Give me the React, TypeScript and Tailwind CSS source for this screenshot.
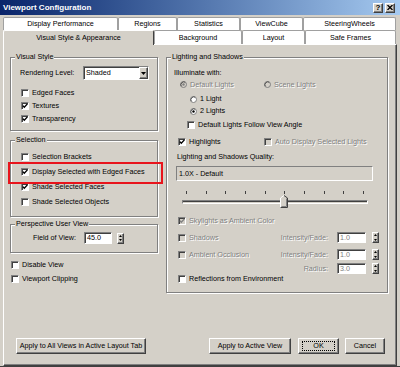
import type { ReactNode } from "react"

const raised =
  "bg-[#d4d0c8] border border-t-white border-l-white border-r-[#404040] border-b-[#404040] shadow-[inset_-1px_-1px_0_#808080]"
const sunken =
  "border border-t-[#808080] border-l-[#808080] border-r-white border-b-white shadow-[inset_1px_1px_0_#404040]"

function Label({ children, disabled }: { children: ReactNode; disabled?: boolean }) {
  return (
    <span
      className={
        disabled
          ? "whitespace-nowrap text-[#808080] [text-shadow:1px_1px_0_#fff]"
          : "whitespace-nowrap"
      }
    >
      {children}
    </span>
  )
}

function Box({ checked, disabled }: { checked?: boolean; disabled?: boolean }) {
  return (
    <span
      className={`relative block h-[8px] w-[8px] shrink-0 ${sunken} ${
        disabled ? "bg-[#d4d0c8]" : "bg-white"
      }`}
    >
      {checked && (
        <svg viewBox="0 0 8 8" className="absolute -inset-[1px] h-[8px] w-[8px]">
          <polyline
            points="1.8,3.6 3.3,5.3 6.4,1.9"
            fill="none"
            stroke={disabled ? "#808080" : "#000"}
            strokeWidth="1.4"
          />
        </svg>
      )}
    </span>
  )
}

function Check({
  label,
  checked,
  disabled,
  className = "",
}: {
  label: string
  checked?: boolean
  disabled?: boolean
  className?: string
}) {
  return (
    <div className={`flex items-center gap-[3px] ${className}`}>
      <Box checked={checked} disabled={disabled} />
      <Label disabled={disabled}>{label}</Label>
    </div>
  )
}

function Radio({
  label,
  checked,
  disabled,
  className = "",
}: {
  label: string
  checked?: boolean
  disabled?: boolean
  className?: string
}) {
  return (
    <div className={`flex items-center gap-[3px] ${className}`}>
      <svg viewBox="0 0 7 7" className="h-[7px] w-[7px] shrink-0">
        <circle cx="3.5" cy="3.5" r="3" fill={disabled ? "#d4d0c8" : "#fff"} stroke="#808080" strokeWidth="1" />
        <path d="M1.2,5.2 A3,3 0 0 1 5.2,1.2" fill="none" stroke="#404040" strokeWidth="0.8" />
        {checked && <circle cx="3.5" cy="3.5" r="1.2" fill={disabled ? "#808080" : "#000"} />}
      </svg>
      <Label disabled={disabled}>{label}</Label>
    </div>
  )
}

function Spinner() {
  return (
    <div className={`flex h-[11px] w-[7px] shrink-0 flex-col ${raised}`}>
      <div className="flex flex-1 items-center justify-center">
        <svg viewBox="0 0 3 2" className="h-[2px] w-[3px]">
          <polygon points="1.5,0 3,2 0,2" fill="#000" />
        </svg>
      </div>
      <div className="flex flex-1 items-center justify-center">
        <svg viewBox="0 0 3 2" className="h-[2px] w-[3px]">
          <polygon points="0,0 3,0 1.5,2" fill="#000" />
        </svg>
      </div>
    </div>
  )
}

function Field({ value, disabled, className = "" }: { value: string; disabled?: boolean; className?: string }) {
  return (
    <div className={`flex h-[11px] items-center bg-white pl-[2px] ${sunken} ${className}`}>
      <span className={disabled ? "text-[#808080]" : ""}>{value}</span>
    </div>
  )
}

function Group({ title, className = "", children }: { title: string; className?: string; children?: ReactNode }) {
  return (
    <div className={`relative flex flex-col border border-[#808080] shadow-[inset_1px_1px_0_#fff,1px_1px_0_#fff] ${className}`}>
      <span className="absolute -top-[5px] left-[4px] bg-[#d4d0c8] px-[1px] leading-[8px]">{title}</span>
      {children}
    </div>
  )
}

function Tab({ label, className }: { label: string; className: string }) {
  return (
    <div
      className={`flex items-center justify-center rounded-t-[2px] border border-b-0 border-[#a0a0a0] bg-white ${className}`}
    >
      {label}
    </div>
  )
}

function Button({ label, className, focused }: { label: string; className: string; focused?: boolean }) {
  return (
    <div className={`flex h-[16px] items-center justify-center ${raised} ${className}`}>
      {focused ? (
        <span className="flex h-[10px] w-[33px] items-center justify-center border border-dotted border-black">
          {label}
        </span>
      ) : (
        label
      )}
    </div>
  )
}

export default function App() {
  const ticks = Array.from({ length: 10 })

  return (
    <div className="relative flex h-[367px] w-[400px] flex-col overflow-hidden border-b border-[#404040] bg-[#d4d0c8] font-['Liberation_Sans',Arial,sans-serif] text-[7.2px] leading-none text-black">
      {/* title bar */}
      <div className="flex h-[15px] shrink-0 items-center bg-gradient-to-r from-[#0a246a] to-[#a6caf0] pl-[3px] pr-[5px]">
        <span className="text-[8px] font-bold text-white">Viewport Configuration</span>
        <div className="ml-auto flex gap-[2px]">
          <div className={`flex h-[10px] w-[10px] items-center justify-center text-[8px] font-bold ${raised}`}>?</div>
          <div className={`flex h-[10px] w-[10px] items-center justify-center ${raised}`}>
            <svg viewBox="0 0 6 5" className="h-[5px] w-[6px]">
              <path d="M0.5,0 L5.5,5 M5.5,0 L0.5,5" stroke="#000" strokeWidth="1.3" />
            </svg>
          </div>
        </div>
      </div>

      {/* tabs */}
      <div className="mt-[2px] flex h-[13px] shrink-0 pl-[3px]">
        <Tab label="Display Performance" className="w-[115px]" />
        <Tab label="Regions" className="w-[59px]" />
        <Tab label="Statistics" className="w-[63px]" />
        <Tab label="ViewCube" className="w-[63px]" />
        <Tab label="SteeringWheels" className="w-[93px]" />
      </div>
      <div className="relative z-10 flex h-[14px] shrink-0 pl-[3px]">
        <div className="flex h-[15px] w-[151px] items-center justify-center rounded-t-[2px] border-l border-t border-r border-l-white border-t-white border-r-[#404040] bg-[#d4d0c8]">
          Visual Style &amp; Appearance
        </div>
        <Tab label="Background" className="w-[88px]" />
        <Tab label="Layout" className="w-[63px]" />
        <Tab label="Safe Frames" className="w-[91px]" />
      </div>

      {/* tab page */}
      <div className="mx-[3px] flex flex-1 flex-col border border-t-white border-l-white border-r-[#404040] border-b-[#404040] pb-[11px] shadow-[inset_-1px_-1px_0_#808080]">
        <div className="flex pt-[12px]">
          {/* left column */}
          <div className="ml-[6px] flex w-[148px] flex-col">
            <Group title="Visual Style" className="h-[74px]">
              <div className="mt-[8px] flex h-[14px] items-center pl-[9px]">
                <span className="w-[63px]">Rendering Level:</span>
                <div className={`flex h-[14px] w-[66px] items-center bg-white ${sunken}`}>
                  <span className="pl-[2px]">Shaded</span>
                  <div className={`ml-auto flex h-[12px] w-[9px] items-center justify-center ${raised}`}>
                    <svg viewBox="0 0 5 3" className="h-[3px] w-[5px]">
                      <polygon points="0,0 5,0 2.5,3" fill="#000" />
                    </svg>
                  </div>
                </div>
              </div>
              <div className="mt-[6px] flex flex-col pl-[10px]">
                <Check label="Edged Faces" className="h-[13px]" />
                <Check label="Textures" checked className="h-[13px]" />
                <Check label="Transparency" checked className="h-[13px]" />
              </div>
            </Group>

            <Group title="Selection" className="mt-[9px] h-[77px]">
              <div className="mt-[8px] flex flex-col pl-[10px]">
                <Check label="Selection Brackets" className="h-[15px]" />
                <Check label="Display Selected with Edged Faces" checked className="h-[15px]" />
                <Check label="Shade Selected Faces" checked className="h-[15px]" />
                <Check label="Shade Selected Objects" className="h-[15px]" />
              </div>
            </Group>

            <Group title="Perspective User View" className="mt-[7px] h-[29px]">
              <div className="mt-[7px] flex h-[12px] items-center pl-[22px]">
                <span className="w-[51px]">Field of View:</span>
                <Field value="45.0" className="h-[12px] w-[28px]" />
                <div className="ml-[5px]">
                  <Spinner />
                </div>
              </div>
            </Group>

            <Check label="Disable View" className="mt-[5px] h-[14px] pl-[1px]" />
            <Check label="Viewport Clipping" className="h-[14px] pl-[1px]" />
          </div>

          {/* right column */}
          <Group title="Lighting and Shadows" className="ml-[8px] h-[236px] w-[222px]">
            <div className="mt-[9px] flex h-[12px] items-center pl-[7px]">Illuminate with:</div>
            <div className="flex h-[12px] items-center pl-[13px]">
              <Radio label="Default Lights" checked disabled className="w-[84px]" />
              <Radio label="Scene Lights" disabled />
            </div>
            <Radio label="1 Light" className="mt-[2px] h-[12px] pl-[23px]" />
            <Radio label="2 Lights" checked className="h-[12px] pl-[23px]" />
            <Check label="Default Lights Follow View Angle" className="mt-[2px] h-[12px] pl-[20px]" />
            <div className="mt-[5px] flex h-[12px] items-center pl-[11px]">
              <Check label="Highlights" checked className="w-[86px]" />
              <Check label="Auto Display Selected Lights" disabled />
            </div>
            <div className="mt-[3px] flex h-[12px] items-center pl-[10px]">Lighting and Shadows Quality:</div>
            <div className={`ml-[9px] mt-[3px] flex h-[15px] w-[197px] items-center pl-[2px] ${sunken} shadow-none`}>
              1.0X - Default
            </div>

            {/* trackbar */}
            <div className="ml-[19px] mt-[10px] flex h-[3px] w-[178px] justify-between">
              {ticks.map((_, i) => (
                <span key={i} className="block h-[3px] w-[1px] bg-[#404040]" />
              ))}
            </div>
            <div className="relative ml-[15px] mt-[1px] h-[13px] w-[186px] pt-[5px]">
              <div className="h-[4px] w-full border border-t-[#808080] border-l-[#808080] border-r-white border-b-white shadow-[inset_0_1px_0_#404040]" />
              <svg viewBox="0 0 8 13" className="absolute left-[98px] top-0 h-[13px] w-[8px]">
                <polygon points="0,3 4,0 8,3 8,13 0,13" fill="#d4d0c8" />
                <polyline points="0.5,13 0.5,3 4,0.5" fill="none" stroke="#fff" strokeWidth="1" />
                <polyline points="4,0.5 7.5,3 7.5,12.5 0.5,12.5" fill="none" stroke="#404040" strokeWidth="1" />
                <polyline points="6.5,3.5 6.5,11.5 1.5,11.5" fill="none" stroke="#808080" strokeWidth="1" />
              </svg>
            </div>

            <Check label="Skylights as Ambient Color" checked disabled className="mt-[7px] h-[12px] pl-[11px]" />
            <div className="mt-[5px] flex h-[11px] items-center pl-[11px] pr-[8px]">
              <Check label="Shadows" disabled />
              <span className="ml-auto text-[#808080] [text-shadow:1px_1px_0_#fff]">Intensity/Fade:</span>
              <Field value="1.0" disabled className="ml-[9px] w-[29px]" />
              <div className="ml-[6px]">
                <Spinner />
              </div>
            </div>
            <div className="mt-[6px] flex h-[11px] items-center pl-[11px] pr-[8px]">
              <Check label="Ambient Occlusion" disabled />
              <span className="ml-auto text-[#808080] [text-shadow:1px_1px_0_#fff]">Intensity/Fade:</span>
              <Field value="1.0" disabled className="ml-[9px] w-[29px]" />
              <div className="ml-[6px]">
                <Spinner />
              </div>
            </div>
            <div className="mt-[3px] flex h-[11px] items-center pr-[8px]">
              <span className="ml-auto text-[#808080] [text-shadow:1px_1px_0_#fff]">Radius:</span>
              <Field value="3.0" disabled className="ml-[9px] w-[29px]" />
              <div className="ml-[6px]">
                <Spinner />
              </div>
            </div>
            <Check label="Reflections from Environment" className="-mt-[1px] h-[11px] pl-[11px]" />
          </Group>
        </div>

        {/* buttons */}
        <div className="mt-auto flex pl-[12px] pr-[11px]">
          <Button label="Apply to All Views in Active Layout Tab" className="w-[130px]" />
          <Button label="Apply to Active View" className="ml-auto w-[82px]" />
          <Button label="OK" focused className="ml-[7px] w-[41px]" />
          <Button label="Cancel" className="ml-[6px] w-[40px]" />
        </div>
      </div>

      {/* red highlight annotation */}
      <div className="absolute left-[8px] top-[162px] h-[22px] w-[155px] border-2 border-[#e8141c]" />
    </div>
  )
}
